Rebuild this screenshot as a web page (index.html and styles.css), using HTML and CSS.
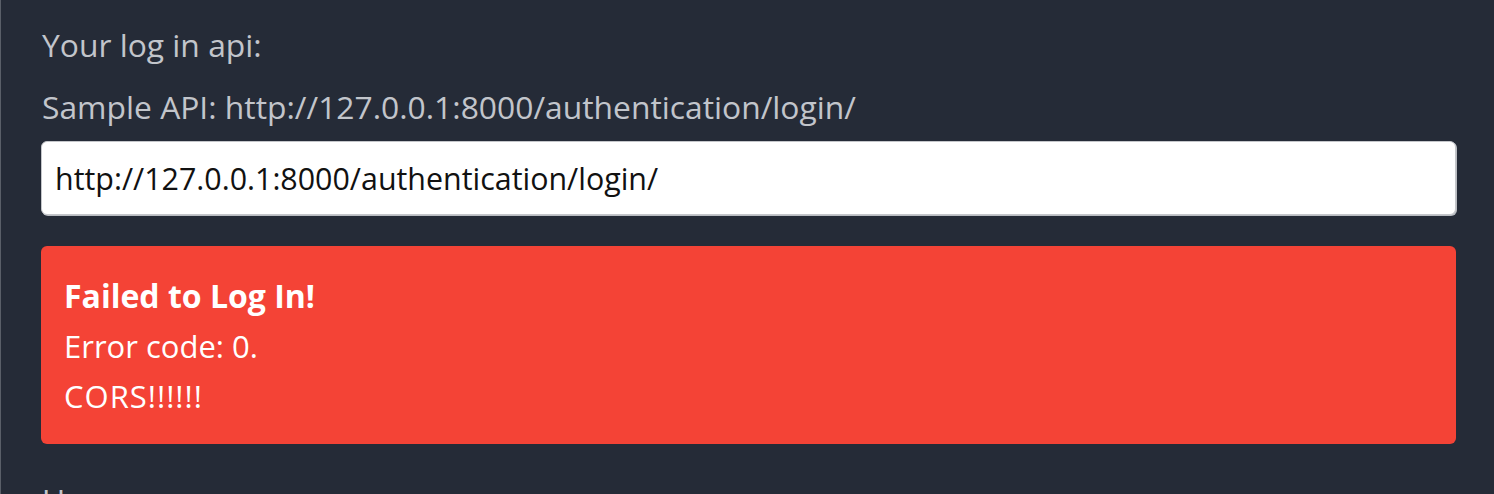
FILE: index.html
```html
<!DOCTYPE html>
<html>
<head>
<meta charset="utf-8">
<link rel="stylesheet" href="styles.css">
</head>
<body>
<div class="panel">
  <p class="label">Your log in api:</p>
  <p class="label">Sample API: http://127.0.0.1:8000/authentication/login/</p>
  <input class="field" type="text" value="http://127.0.0.1:8000/authentication/login/">
  <div class="alert">
    <div class="alert-title">Failed to Log In!</div>
    <div class="alert-line">Error code: 0.</div>
    <div class="alert-line cors">CORS!!!!!!</div>
  </div>
  <p class="label">Username:</p>
</div>
</body>
</html>
```
FILE: styles.css
```css
html, body {
  margin: 0;
  padding: 0;
  background: #252b37;
  height: 100%;
  overflow: hidden;
}
.panel {
  border-left: 1px solid #5a5f68;
  padding: 21px 38px 0 41px;
  font-family: "Open Sans", "Noto Sans", sans-serif;
  color: #c2c5cb;
  min-height: 100%;
  box-sizing: border-box;
}
.label {
  margin: 0 0 14px 0;
  font-size: 31.8px;
  line-height: 48px;
}
.field {
  display: block;
  box-sizing: border-box;
  width: calc(100% + 1px);
  height: 74px;
  margin: -4px 0 31px -1px;
  padding: 0 13px;
  border: 1px solid #c4c6ca;
  border-radius: 6px;
  box-shadow: 1px 1px 0 #b9bcc1;
  background: #fff;
  color: #111;
  font-family: "Open Sans", "Noto Sans", sans-serif;
  font-size: 30.4px;
  outline: none;
}
.alert {
  background: #f44336;
  color: #fff;
  border-radius: 6px;
  padding: 25px 23px 23px 23px;
  margin-left: -1px;
  font-size: 31px;
  line-height: 50px;
  margin-bottom: 32px;
}
.alert-title {
  font-weight: 700;
  font-size: 32px;
}
.cors {
  letter-spacing: 1px;
}
```
